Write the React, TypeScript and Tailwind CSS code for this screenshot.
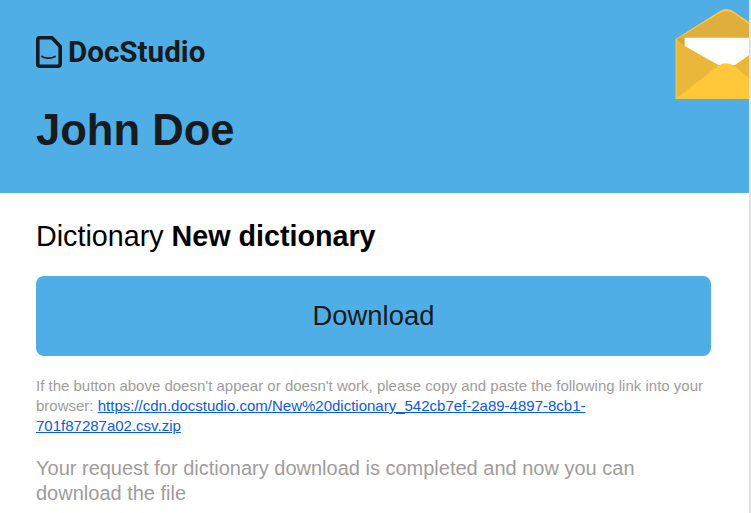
import React from 'react';

const Logo: React.FC = () => (
    <div className="flex items-center gap-[6px] h-[32px]">
        <svg width="26" height="32" viewBox="0 0 26 32" fill="none" stroke="#161b20" strokeWidth="3.6" strokeLinejoin="round" strokeLinecap="round">
            <path d="M3.5 1.8H16L24.2 10.5V28A2.3 2.3 0 0 1 21.9 30.2H3.5A1.8 1.8 0 0 1 1.8 28.5V3.5A1.8 1.8 0 0 1 3.5 1.8Z" />
            <path d="M6 20.5C9.5 22.7 15.5 22.7 19 20.5" strokeWidth="1.8" />
        </svg>
        <span className="mt-[2px] font-['Roboto',sans-serif] font-bold text-[29.6px] leading-none text-[#161b20]">DocStudio</span>
    </div>
);

const Envelope: React.FC = () => (
    <svg width="74" height="92" viewBox="0 0 74 92" className="absolute left-[675px] top-[8px]">
        <path d="M0.5 31L45 3Q51.7 -1 58 3L74 14V91H0.5Z" fill="#ffc83a" />
        <path d="M2 31L45 5Q51.7 1.5 58 5L74 16V60H2Z" fill="#dfae3d" />
        <path d="M9.3 29.7H74V70H9.3Z" fill="#ffffff" />
        <path d="M9.3 37.7L43.3 57H60L74 47V90H1.5V31L9.3 31Z" fill="#ebb73a" />
        <path d="M9.3 29.7L1.5 31L9.3 37.7Z" fill="#d4a53c" />
        <path d="M0.5 91L43.3 57.7Q51.7 52.5 60 58.7L74 70.3V91Z" fill="#ffc83a" />
    </svg>
);

const App: React.FC = () => {
    return (
        <div className="relative h-[513px] w-[751px] overflow-hidden bg-white font-['Liberation_Sans',sans-serif] flex">
            <div className="w-[749px] shrink-0">
                <header className="h-[193px] bg-[#50aee6] px-[36px] pt-[36px]">
                    <Logo />
                    <h1 className="mt-[36px] text-[43.6px] leading-[52px] font-bold text-[#161b20]">John Doe</h1>
                </header>
                <main className="px-[36px] pr-[38px] pt-[26px]">
                    <h2 className="text-[28.7px] leading-[34px] text-black">
                        Dictionary <strong>New dictionary</strong>
                    </h2>
                    <a className="mt-[23px] flex h-[80px] items-center justify-center rounded-[8px] bg-[#50aee6] text-[27.4px] text-[#161b20]">
                        Download
                    </a>
                    <p className="mt-[20.4px] text-[15px] leading-[19.6px] text-[#a09c9c]">
                        If the button above doesn't appear or doesn't work, please copy and paste the following link into your browser:{' '}
                        <a className="text-[#0b5cd5] underline">https://cdn.docstudio.com/New%20dictionary_542cb7ef-2a89-4897-8cb1-701f87287a02.csv.zip</a>
                    </p>
                    <p className="mt-[20.6px] text-[20px] leading-[25px] text-[#a09c9c]">
                        Your request for dictionary download is completed and now you can download the file
                    </p>
                </main>
            </div>
            <div className="w-[2px] bg-[#e4e4e4]" />
            <Envelope />
        </div>
    );
};

export default App;
